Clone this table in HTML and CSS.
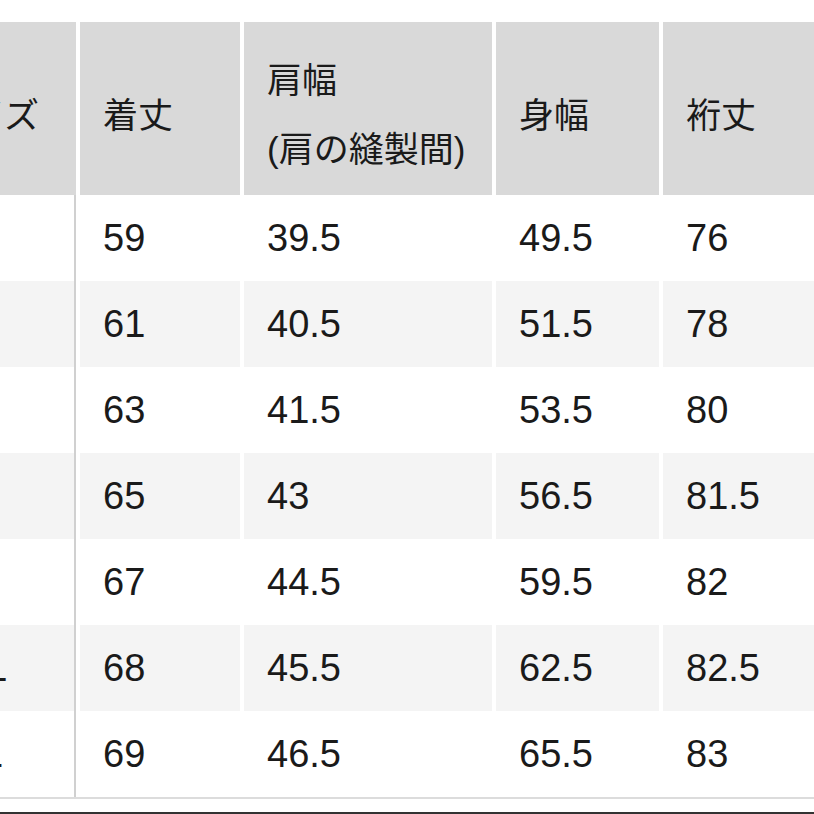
FILE: index.html
```html
<!DOCTYPE html>
<html lang="ja">
<head>
<meta charset="utf-8">
<title>サイズ表</title>
<link rel="stylesheet" href="styles.css">
</head>
<body>
<div class="page">
  <table class="size-table">
    <thead>
      <tr>
        <th class="c1">サイズ</th>
        <th class="c2">着丈</th>
        <th class="c3 two">肩幅<br>(肩の縫製間)</th>
        <th class="c4">身幅</th>
        <th class="c5">裄丈</th>
      </tr>
    </thead>
    <tbody>
      <tr><td class="c1">XS</td><td>59</td><td>39.5</td><td>49.5</td><td>76</td></tr>
      <tr class="alt"><td class="c1">S</td><td>61</td><td>40.5</td><td>51.5</td><td>78</td></tr>
      <tr><td class="c1">M</td><td>63</td><td>41.5</td><td>53.5</td><td>80</td></tr>
      <tr class="alt"><td class="c1">L</td><td>65</td><td>43</td><td>56.5</td><td>81.5</td></tr>
      <tr><td class="c1">XL</td><td>67</td><td>44.5</td><td>59.5</td><td>82</td></tr>
      <tr class="alt"><td class="c1">XXL</td><td>68</td><td>45.5</td><td>62.5</td><td>82.5</td></tr>
      <tr><td class="c1">3XL</td><td>69</td><td>46.5</td><td>65.5</td><td>83</td></tr>
    </tbody>
  </table>
  <div class="bottom-rule"></div>
  <div class="edge"></div>
</div>
</body>
</html>
```

FILE: styles.css
```css
html, body {
  margin: 0;
  padding: 0;
  background: #ffffff;
  overflow: hidden;
  width: 814px;
  height: 814px;
}

.page {
  width: 814px;
  height: 814px;
  padding-top: 22px;
  box-sizing: border-box;
  display: flex;
  flex-direction: column;
  font-family: "Liberation Sans", "Noto Sans CJK JP", sans-serif;
  color: #1a1a1a;
}

.size-table {
  border-collapse: separate;
  border-spacing: 4px 0;
  margin-left: -92px;
  table-layout: fixed;
  width: 999px;
  flex: none;
}

.size-table th,
.size-table td {
  text-align: left;
  padding: 0 0 0 23px;
  white-space: nowrap;
  overflow: hidden;
  box-sizing: border-box;
}

.size-table th {
  height: 173px;
  background: #d9d9d9;
  font-weight: 400;
  font-size: 35px;
  line-height: 69px;
  vertical-align: middle;
  padding-top: 13px;
}

.size-table td {
  height: 86px;
  font-size: 38px;
  vertical-align: middle;
}

.size-table tr.alt td {
  background: #f4f4f4;
}

.size-table td.c1 {
  border-right: 2px solid #d0d0d0;
  padding-left: 23px;
}

.c1 { width: 164px; }
.c2 { width: 160px; }
.c3 { width: 248px; }
.c4 { width: 163px; }
.c5 { width: 240px; }

.bottom-rule {
  height: 2px;
  background: #dcdcdc;
  flex: none;
}

.edge {
  margin-top: auto;
  height: 2px;
  background: #333333;
  flex: none;
}
```
